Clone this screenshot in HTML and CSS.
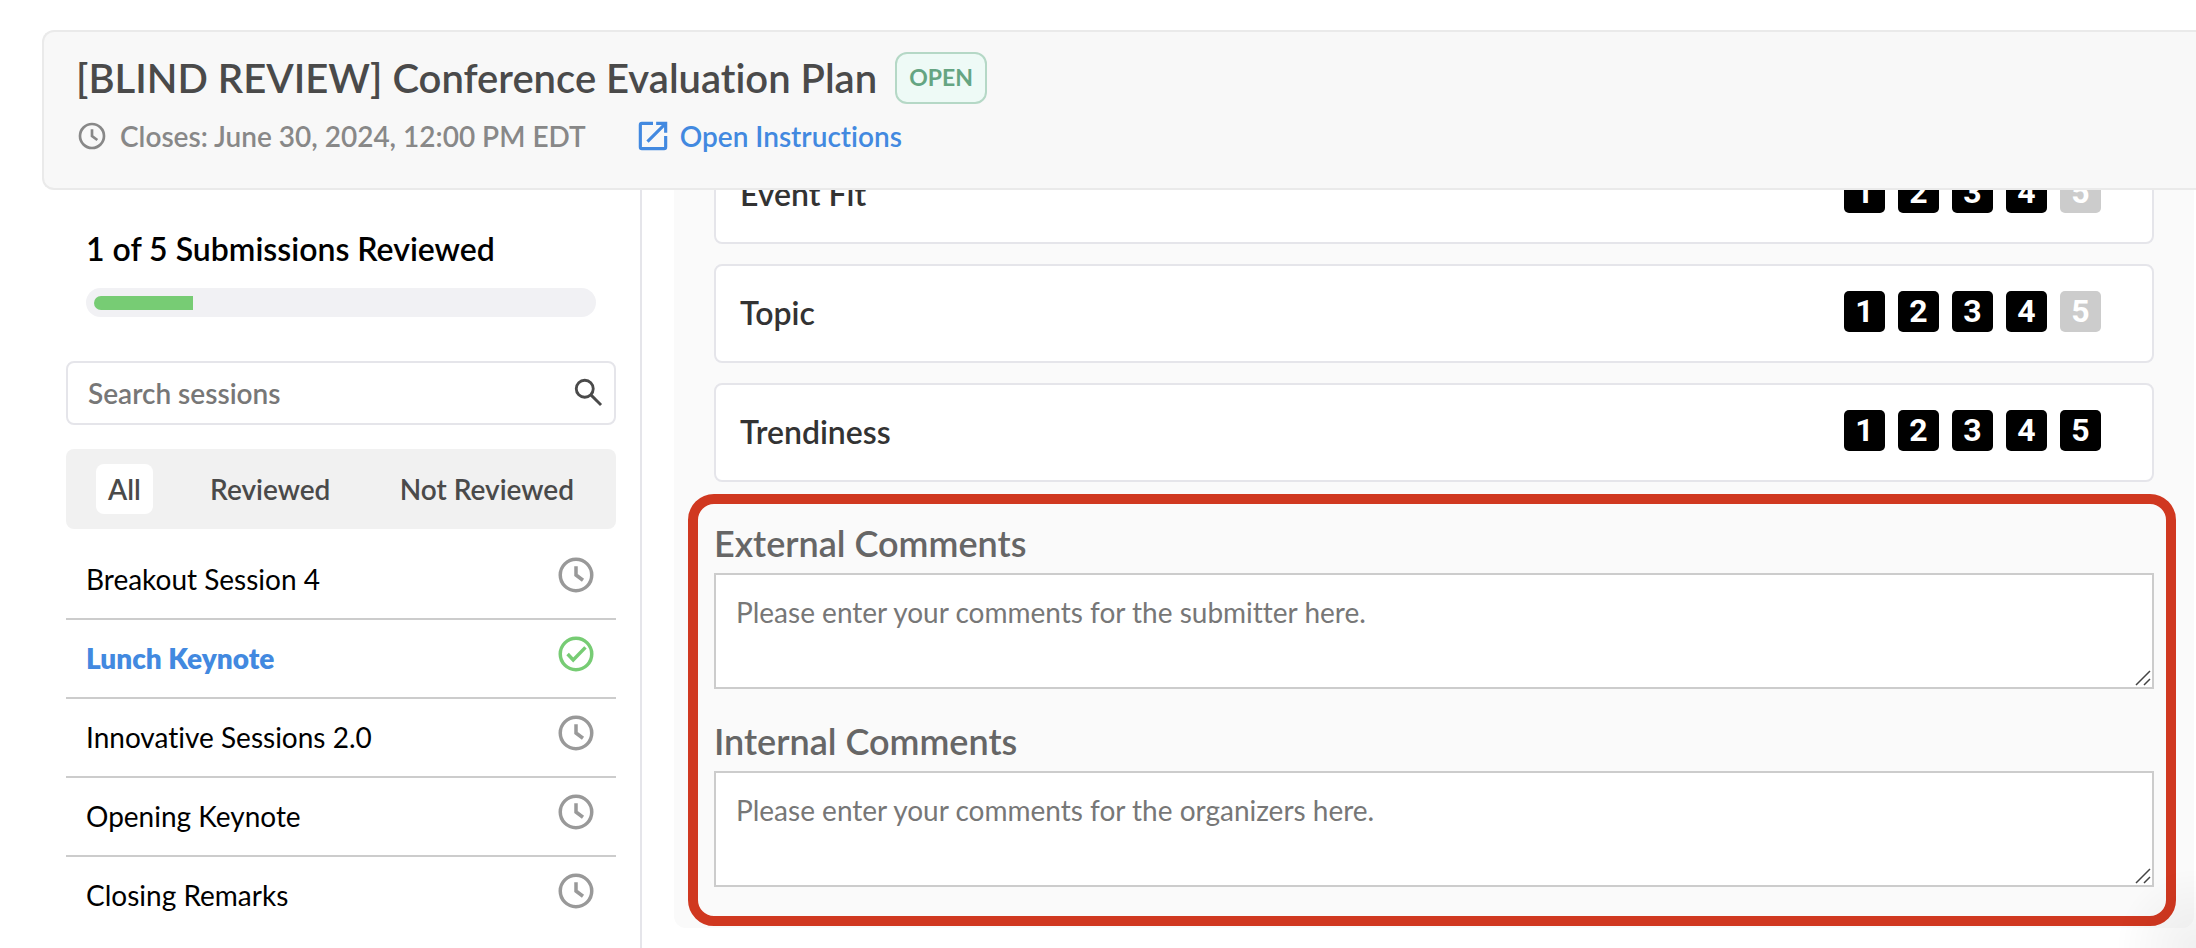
FILE: index.html
```html
<!DOCTYPE html>
<html lang="en">
<head>
    <meta charset="UTF-8">
    <meta name="viewport" content="width=device-width, initial-scale=1.0">
    <title>Conference Evaluation Plan</title>
    <link rel="stylesheet" href="styles.css">
</head>
<body>
    <header class="plan-header">
        <div class="title-row">
            <h1>[BLIND REVIEW] Conference Evaluation Plan</h1>
            <span class="badge">OPEN</span>
        </div>
        <div class="meta-row">
            <svg class="meta-icon" viewBox="0 0 24 24"><circle cx="12" cy="12" r="9" /><path d="M12 7v5l4 3" /></svg>
            <span class="closes">Closes: June 30, 2024, 12:00 PM EDT</span>
            <a class="instructions" href="#instructions">
                <svg class="link-icon" viewBox="0 0 24 24"><path d="M19 19H5V5h7V3H5a2 2 0 0 0-2 2v14a2 2 0 0 0 2 2h14a2 2 0 0 0 2-2v-7h-2v7zM14 3v2h3.6l-9.8 9.8 1.4 1.4L19 6.4V10h2V3h-7z" /></svg>
                Open Instructions
            </a>
        </div>
    </header>

    <div class="layout">
        <aside class="sidebar">
            <div class="progress">
                <h2 id="progress-title">1 of 5 Submissions Reviewed</h2>
                <div class="progress-track" role="progressbar" aria-labelledby="progress-title" aria-valuemin="0" aria-valuemax="5" aria-valuenow="1">
                    <div class="progress-fill" style="width: 20%"></div>
                </div>
            </div>

            <div class="search">
                <input type="search" aria-label="Search sessions" placeholder="Search sessions">
                <svg class="search-icon" viewBox="0 0 24 24"><circle cx="9" cy="9" r="6" /><path d="M13.5 13.5l7 7" /></svg>
            </div>

            <div class="tabs">
                <button type="button" class="active">All</button>
                <button type="button">Reviewed</button>
                <button type="button">Not Reviewed</button>
            </div>

            <ul class="sessions">
                <li>
                    <a href="#s1">Breakout Session 4</a>
                    <svg class="status" viewBox="0 0 24 24"><circle cx="12" cy="12" r="9" /><path d="M12 7v5l4 3" /></svg>
                </li>
                <li class="current">
                    <a href="#s2">Lunch Keynote</a>
                    <svg class="status done" viewBox="0 0 24 24"><circle cx="12" cy="12" r="9" /><path d="M7.2 12l3.2 3.4 7-7.2" /></svg>
                </li>
                <li>
                    <a href="#s3">Innovative Sessions 2.0</a>
                    <svg class="status" viewBox="0 0 24 24"><circle cx="12" cy="12" r="9" /><path d="M12 7v5l4 3" /></svg>
                </li>
                <li>
                    <a href="#s4">Opening Keynote</a>
                    <svg class="status" viewBox="0 0 24 24"><circle cx="12" cy="12" r="9" /><path d="M12 7v5l4 3" /></svg>
                </li>
                <li>
                    <a href="#s5">Closing Remarks</a>
                    <svg class="status" viewBox="0 0 24 24"><circle cx="12" cy="12" r="9" /><path d="M12 7v5l4 3" /></svg>
                </li>
            </ul>
        </aside>

        <main class="review">
            <form class="panel">
                <div class="criterion" role="radiogroup" aria-labelledby="fit">
                    <h3 id="fit">Event Fit</h3>
                    <div class="scores">
                        <label><input type="radio" name="fit">1</label>
                        <label><input type="radio" name="fit">2</label>
                        <label><input type="radio" name="fit">3</label>
                        <label><input type="radio" name="fit" checked>4</label>
                        <label><input type="radio" name="fit">5</label>
                    </div>
                </div>
                <div class="criterion" role="radiogroup" aria-labelledby="topic">
                    <h3 id="topic">Topic</h3>
                    <div class="scores">
                        <label><input type="radio" name="topic">1</label>
                        <label><input type="radio" name="topic">2</label>
                        <label><input type="radio" name="topic">3</label>
                        <label><input type="radio" name="topic" checked>4</label>
                        <label><input type="radio" name="topic">5</label>
                    </div>
                </div>
                <div class="criterion" role="radiogroup" aria-labelledby="trend">
                    <h3 id="trend">Trendiness</h3>
                    <div class="scores">
                        <label><input type="radio" name="trend">1</label>
                        <label><input type="radio" name="trend">2</label>
                        <label><input type="radio" name="trend">3</label>
                        <label><input type="radio" name="trend">4</label>
                        <label><input type="radio" name="trend" checked>5</label>
                    </div>
                </div>

                <div class="comments">
                    <label for="external">External Comments</label>
                    <div class="field">
                        <textarea id="external" placeholder="Please enter your comments for the submitter here."></textarea>
                        <svg class="grip" viewBox="0 0 16 16"><path d="M1 15L15 1M9 15l6-6" /></svg>
                    </div>
                    <label for="internal">Internal Comments</label>
                    <div class="field">
                        <textarea id="internal" placeholder="Please enter your comments for the organizers here."></textarea>
                        <svg class="grip" viewBox="0 0 16 16"><path d="M1 15L15 1M9 15l6-6" /></svg>
                    </div>
                </div>
            </form>
        </main>
    </div>
</body>
</html>
```

FILE: styles.css
```css
* {
    box-sizing: border-box;
}
body {
    font-family: Lato, "Open Sans", sans-serif;
    font-size: 28px;
    line-height: 32px;
    font-variant-ligatures: none;
    color: #000;
    background-color: #fff;
    margin: 0;
    padding-top: 30px;
    height: 100vh;
    display: flex;
    flex-direction: column;
    overflow: hidden;
}
/* soft shadow in the bottom corner of the window */
body::after {
    content: "";
    position: fixed;
    right: 0;
    bottom: 0;
    width: 80px;
    height: 80px;
    background: radial-gradient(farthest-side at 100% 100%, rgba(0, 0, 0, 0.06), rgba(0, 0, 0, 0));
    pointer-events: none;
}
h1, h2, h3 {
    margin: 0;
}
svg {
    fill: none;
    stroke: currentColor;
    stroke-width: 2;
    flex-shrink: 0;
}
a {
    color: inherit;
    text-decoration: none;
}
input, textarea, button {
    font: inherit;
    font-variant-ligatures: none;
    color: inherit;
}

/* Header */
.plan-header {
    flex-shrink: 0;
    margin-left: 42px;
    padding: 20px 32px 36px;
    background-color: #f8f8f8;
    border: 2px solid #eaeaea;
    border-right: 0;
    border-radius: 12px 0 0 12px;
}
.title-row {
    display: flex;
    align-items: center;
    gap: 18px;
}
h1 {
    font-size: 40px;
    line-height: 50px;
    font-weight: 600;
    color: #4a4a4a;
}
.badge {
    height: 52px;
    padding: 0 12px;
    border: 2px solid #b5d8c6;
    border-radius: 12px;
    background-color: #eefaf6;
    color: #65a582;
    font-size: 23px;
    line-height: 46px;
    font-weight: 700;
}
.meta-row {
    display: flex;
    align-items: center;
    margin-top: 16px;
    font-weight: 600;
    color: #888;
}
.meta-icon {
    width: 32px;
    height: 32px;
    margin-right: 12px;
}
.instructions {
    display: flex;
    align-items: center;
    gap: 8px;
    margin-left: 48px;
    color: #4289e0;
}
.link-icon {
    width: 38px;
    height: 38px;
    margin: -3px 0;
    fill: currentColor;
    stroke: none;
}

.layout {
    flex: 1;
    min-height: 0;
    display: flex;
}

/* Sidebar */
.sidebar {
    width: 642px;
    flex-shrink: 0;
    padding: 40px 24px 0 66px;
    border-right: 2px solid #e5e5ea;
}
.progress {
    padding: 0 20px;
}
h2 {
    font-size: 32px;
    line-height: 38px;
    font-weight: 600;
}
.progress-track {
    height: 29px;
    margin-top: 20px;
    padding: 8px;
    border-radius: 15px;
    background-color: #f1f1f4;
}
.progress-fill {
    height: 14px;
    border-radius: 7px 0 0 7px;
    background-color: #77cc74;
}
.search {
    display: flex;
    align-items: center;
    height: 64px;
    margin-top: 44px;
    padding: 0 8px 0 20px;
    border: 2px solid #e5e5ea;
    border-radius: 8px;
}
.search input {
    flex: 1;
    min-width: 0;
    border: 0;
    padding: 0;
    outline: none;
    background: none;
    font-weight: 600;
}
.search input::placeholder {
    color: #777;
}
.search-icon {
    width: 34px;
    height: 34px;
    color: #4a4a4a;
}
.tabs {
    display: flex;
    justify-content: space-between;
    margin-top: 24px;
    padding: 15px 30px;
    border-radius: 8px;
    background-color: #f1f1f1;
}
.tabs button {
    height: 50px;
    padding: 0 12px;
    border: 0;
    border-radius: 8px;
    background: none;
    font-weight: 600;
    color: #4a4a4a;
}
.tabs .active {
    background-color: #fff;
}
.sessions {
    list-style: none;
    margin: 12px 0 0;
    padding: 0;
}
.sessions li {
    display: flex;
    justify-content: space-between;
    height: 79px;
    padding: 13px 19px 0 20px;
    border-bottom: 2px solid #ccc;
}
.sessions li:last-child {
    border-bottom: 0;
}
.sessions a {
    padding-top: 9px;
}
.sessions .current a {
    color: #4289e0;
    font-weight: 800;
}
.status {
    width: 42px;
    height: 42px;
    color: #999;
}
.status.done {
    color: #77cc74;
}

/* Review form, scrolled down to its last fields */
.review {
    flex: 1;
    min-width: 0;
    display: flex;
    flex-direction: column;
    justify-content: flex-end;
    overflow: hidden;
    padding: 0 2px 20px 32px;
}
.panel {
    padding: 20px 18px 2px 14px;
    border-radius: 12px;
    background-color: #fafafa;
}
.criterion {
    display: flex;
    justify-content: space-between;
    align-items: center;
    height: 99px;
    margin: 0 22px 20px 26px;
    padding: 0 51px 0 24px;
    border: 2px solid #e5e5ea;
    border-radius: 8px;
    background-color: #fff;
}
h3 {
    padding-bottom: 2px;
    font-size: 32px;
    line-height: 38px;
    font-weight: 600;
    color: #333;
}
.scores {
    display: flex;
    gap: 13px;
    padding-bottom: 5px;
}
.scores label {
    width: 41px;
    height: 41px;
    border-radius: 5px;
    background-color: #000;
    color: #fff;
    font-family: Roboto, sans-serif;
    font-size: 32px;
    line-height: 41px;
    font-weight: 700;
    text-align: center;
    cursor: pointer;
}
.scores label:has(input:checked) ~ label {
    background-color: #ccc;
}
.scores input {
    appearance: none;
    position: absolute;
    margin: 0;
}
.comments {
    margin-top: -8px;
    padding: 20px 12px 29px 16px;
    border: 10px solid #d03820;
    border-radius: 26px;
}
.comments label {
    display: block;
    font-size: 36px;
    line-height: 38px;
    font-weight: 600;
    color: #666;
}
.field {
    position: relative;
    height: 116px;
    margin-top: 11px;
}
.field + label {
    margin-top: 33px;
}
textarea {
    display: block;
    width: 100%;
    height: 100%;
    padding: 21px 20px;
    border: 2px solid #ccc;
    background-color: #fff;
    resize: none;
    outline: none;
}
textarea::placeholder {
    color: #777;
}
.grip {
    position: absolute;
    right: 3px;
    bottom: 3px;
    width: 16px;
    height: 16px;
    color: #444;
    stroke-width: 1.5;
}
```
